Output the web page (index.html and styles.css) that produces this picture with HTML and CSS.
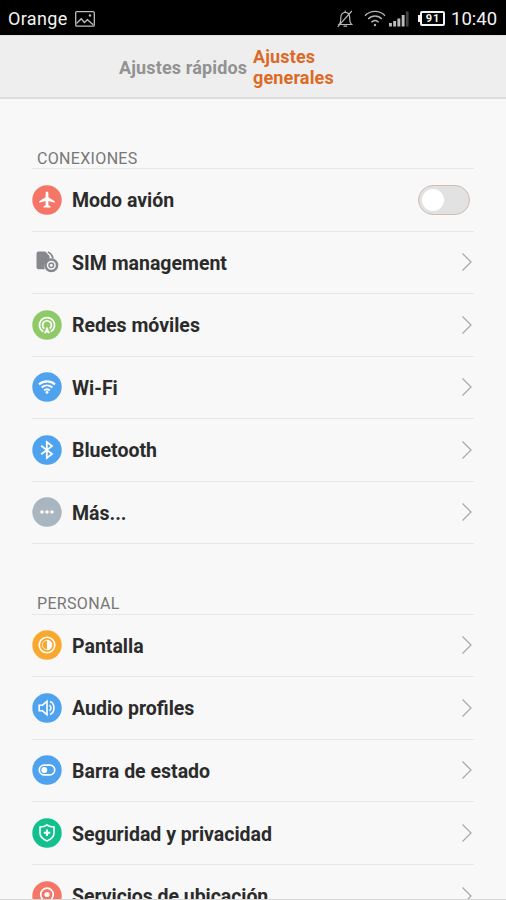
FILE: index.html
```html
<!DOCTYPE html>
<html lang="es">
<head>
<meta charset="utf-8">
<title>Ajustes</title>
<link rel="stylesheet" href="styles.css">
</head>
<body>
<div class="screen">
  <header class="status">
    <span class="carrier">Orange</span>
    <svg class="picture" width="20" height="16" viewBox="0 0 20 16" fill="none" stroke="#bdbdbd" stroke-width="1.3"><rect x=".7" y=".7" width="18.6" height="14.4" rx="1.2"/><path d="M1.5 12.5l4.700-4.700 3.200 3.700 3-2.800 5.800 5"/><circle cx="15" cy="4.500" r=".6"/></svg>
    <div class="indicators">
      <svg class="bell" width="18" height="20" viewBox="0 0 18 20" fill="none" stroke="#b8b8b8" stroke-width="1.2"><path d="M3 15.500c1.800-1.600 1.800-3.200 1.800-6.500 0-3.400 1.700-5.600 4.500-5.600s4.400 2.200 4.400 5.600c0 3.300.1 4.900 1.900 6.500zM9.200 1.500v2M7.500 17.200h3.600M1.700 17.800L15.800 2"/></svg>
      <svg class="signal-wifi" width="22" height="17" viewBox="0 0 22 17" fill="none" stroke="#b4b4b4" stroke-width="1.4"><path d="M1 5.700c5.400-5.800 14.600-5.800 20 0M4.200 9c3.800-4 9.800-4 13.600 0M7.400 12.200c2.200-2.200 5-2.200 7.200 0"/><circle cx="11" cy="15" r="1.200" fill="#b4b4b4" stroke="none"/></svg>
      <svg class="bars" width="20" height="16" viewBox="0 0 20 16" fill="#bcbcbc"><path d="M0 12h2.900v3.500H0zM4.200 10h2.900v5.500H4.200zM8.400 7.500h2.900v8H8.400zM12.700 4h2.900v11.500h-2.900z"/><path d="M16.900 .5h2.700v15h-2.700z" fill="#444"/></svg>
      <div class="battery">91</div>
      <span class="clock">10:40</span>
    </div>
  </header>
  <nav class="tabs">
    <a class="tab quick">Ajustes rápidos</a>
    <a class="tab current">Ajustes<br>generales</a>
  </nav>
  <main class="settings">
    <section class="group">
      <h2>CONEXIONES</h2>
      <div class="row">
        <svg class="icon" viewBox="0 0 30 30"><circle cx="15" cy="15" r="14.700" fill="#f57567"/><path fill="#fff" d="M15 6.600c.9 0 1.400.9 1.400 2.200v3.400l6.400 4v1.600l-6.400-1.800v4l2.200 1.600v1H11.400v-1l2.200-1.600v-4l-6.400 1.800v-1.600l6.400-4V8.800c0-1.300.5-2.200 1.400-2.200z"/></svg>
        <span class="label">Modo avión</span>
        <span class="switch"><span class="knob"></span></span>
      </div>
      <div class="row">
        <svg class="icon" viewBox="0 0 30 30"><path fill="#85898e" d="M6.500 4.500h6.700l4.300 4.500v3.200c-4 1.300-6.200 5.400-4.700 10.100H6.500a2 2 0 0 1-2-2V6.500a2 2 0 0 1 2-2z"/><path d="M15.800 5c2.900 1.200 4.600 3.200 5.200 6.300" fill="none" stroke="#85898e" stroke-width="1.800"/><circle cx="19.300" cy="18.300" r="5.800" fill="#f8f8f8" stroke="#85898e" stroke-width="2.500"/><circle cx="19.300" cy="18.300" r="2.300" fill="none" stroke="#85898e" stroke-width="1.500"/></svg>
        <span class="label">SIM management</span>
        <svg class="chevron" viewBox="0 0 12 20"><path d="M1.500 1.500l8.500 8.500-8.500 8.500"/></svg>
      </div>
      <div class="row">
        <svg class="icon" viewBox="0 0 30 30"><circle cx="15" cy="15" r="14.700" fill="#8fca69"/><g fill="none" stroke="#fff" stroke-width="1.700"><path d="M11.300 21.800a7.600 7.600 0 1 1 7.400 0"/><path d="M12.300 18.600a4.400 4.400 0 1 1 5.400 0"/></g><path d="M15 16.500l-3 6.700h2l1-1.200 1 1.200h2z" fill="#fff"/></svg>
        <span class="label">Redes móviles</span>
        <svg class="chevron" viewBox="0 0 12 20"><path d="M1.500 1.500l8.500 8.500-8.500 8.500"/></svg>
      </div>
      <div class="row">
        <svg class="icon" viewBox="0 0 30 30"><circle cx="15" cy="15" r="14.700" fill="#4ea2ee"/><g fill="none" stroke="#fff" stroke-width="2.100"><path d="M7 12.400c4.700-4 11.300-4 16 0M9.600 15.500c3.200-2.700 7.600-2.700 10.800 0M12.200 18.300c1.700-1.300 3.900-1.300 5.600 0"/></g><circle cx="15" cy="20.400" r="1.400" fill="#fff"/></svg>
        <span class="label">Wi-Fi</span>
        <svg class="chevron" viewBox="0 0 12 20"><path d="M1.500 1.500l8.500 8.500-8.500 8.500"/></svg>
      </div>
      <div class="row">
        <svg class="icon" viewBox="0 0 30 30"><circle cx="15" cy="15" r="14.700" fill="#4ea2ee"/><path d="M9.200 10.800l10.800 8.100-5.200 4V7.100l5.200 4-10.800 8.100" fill="none" stroke="#fff" stroke-width="1.800"/></svg>
        <span class="label">Bluetooth</span>
        <svg class="chevron" viewBox="0 0 12 20"><path d="M1.500 1.500l8.500 8.500-8.500 8.500"/></svg>
      </div>
      <div class="row">
        <svg class="icon" viewBox="0 0 30 30"><circle cx="15" cy="15" r="14.700" fill="#a9b5bf"/><g fill="#fff"><circle cx="10" cy="15" r="1.800"/><circle cx="15" cy="15" r="1.800"/><circle cx="20" cy="15" r="1.800"/></g></svg>
        <span class="label">Más...</span>
        <svg class="chevron" viewBox="0 0 12 20"><path d="M1.500 1.500l8.500 8.500-8.500 8.500"/></svg>
      </div>
    </section>
    <section class="group">
      <h2>PERSONAL</h2>
      <div class="row">
        <svg class="icon" viewBox="0 0 30 30"><circle cx="15" cy="15" r="14.700" fill="#f9a82f"/><circle cx="15" cy="15" r="7.800" fill="none" stroke="#fff" stroke-width="1.600"/><circle cx="15" cy="15" r="4.700" fill="none" stroke="#fff" stroke-width=".8"/><path d="M15 9.800a5.200 5.200 0 0 1 0 10.400z" fill="#fff"/></svg>
        <span class="label">Pantalla</span>
        <svg class="chevron" viewBox="0 0 12 20"><path d="M1.500 1.500l8.500 8.500-8.500 8.500"/></svg>
      </div>
      <div class="row">
        <svg class="icon" viewBox="0 0 30 30"><circle cx="15" cy="15" r="14.700" fill="#4ea2ee"/><g fill="none" stroke="#fff" stroke-width="1.600"><path d="M7.200 12.200h3.300l4.500-4v13.600l-4.500-4H7.200zM17.500 12.200c1.900 1.200 1.900 4.400 0 5.600M18 8.600c5.300 2 5.300 10.800 0 12.800"/></g></svg>
        <span class="label">Audio profiles</span>
        <svg class="chevron" viewBox="0 0 12 20"><path d="M1.500 1.500l8.500 8.500-8.500 8.500"/></svg>
      </div>
      <div class="row">
        <svg class="icon" viewBox="0 0 30 30"><circle cx="15" cy="15" r="14.700" fill="#4ea2ee"/><rect x="7.300" y="10.200" width="15.400" height="9.600" rx="4.800" fill="none" stroke="#fff" stroke-width="1.700"/><circle cx="12.300" cy="15" r="2.900" fill="#fff"/></svg>
        <span class="label">Barra de estado</span>
        <svg class="chevron" viewBox="0 0 12 20"><path d="M1.500 1.500l8.500 8.500-8.500 8.500"/></svg>
      </div>
      <div class="row">
        <svg class="icon" viewBox="0 0 30 30"><circle cx="15" cy="15" r="14.700" fill="#11c08d"/><path d="M15 7c2 1.500 4.300 2 7 2v5.700c0 4-2.800 6.500-7 8.200-4.200-1.700-7-4.200-7-8.200V9c2.700 0 5-.5 7-2z" fill="none" stroke="#fff" stroke-width="1.600"/><path d="M15 11.600v6.400M11.800 14.800h6.400" stroke="#fff" stroke-width="2.100"/></svg>
        <span class="label">Seguridad y privacidad</span>
        <svg class="chevron" viewBox="0 0 12 20"><path d="M1.500 1.500l8.500 8.500-8.500 8.500"/></svg>
      </div>
      <div class="row">
        <svg class="icon" viewBox="0 0 30 30"><circle cx="15" cy="15" r="14.700" fill="#f57567"/><path d="M15 23.500c-3.500-3.500-6.300-6.500-6.300-10a6.300 6.300 0 0 1 12.600 0c0 3.500-2.800 6.500-6.300 10z" fill="none" stroke="#fff" stroke-width="1.700"/><circle cx="15" cy="13.500" r="2.600" fill="#fff"/></svg>
        <span class="label location">Servicios de ubicación</span>
        <svg class="chevron" viewBox="0 0 12 20"><path d="M1.500 1.500l8.500 8.500-8.500 8.500"/></svg>
      </div>
    </section>
  </main>
</div>
</body>
</html>
```
FILE: styles.css
```css
* { box-sizing: border-box; }
body { margin: 0; background: #f8f8f8; font-family: Roboto, "Liberation Sans", sans-serif; }
.screen { width: 506px; height: 900px; overflow: hidden; display: flex; flex-direction: column; border-bottom: 1px solid #d6d6d6; }
.status { height: 35px; flex: none; background: #000; color: #f4f4f4; display: flex; align-items: center; padding: 2px 9px 0 8px; }
.carrier { font-size: 18px; letter-spacing: .35px; width: 60px; white-space: nowrap; }
.picture { margin-left: 7px; }
.indicators { margin-left: auto; display: flex; align-items: center; }
.bell { margin-right: 10px; }
.signal-wifi { margin-right: 3px; }
.bars { margin-right: 11px; }
.battery { position: relative; width: 25px; height: 15px; border: 2px solid #f4f4f4; border-radius: 2px; font-size: 11px; font-weight: 700; line-height: 11px; letter-spacing: 1px; text-align: center; padding-left: 1px; margin-right: 6px; }
.battery::before { content: ""; position: absolute; left: -4px; top: 2px; width: 2px; height: 7px; background: #f4f4f4; }
.clock { font-size: 18.500px; width: 46px; white-space: nowrap; }
.tabs { height: 64px; flex: none; background: #eee; border-top: 1px solid #e2e2e2; border-bottom: 2px solid #ddd; display: flex; align-items: center; padding: 1px 0 0 119px; }
.tab { font-size: 18px; line-height: 21px; font-weight: 700; letter-spacing: .15px; white-space: nowrap; }
.quick { width: 134px; color: #929292; }
.current { color: #dc6a26; }
.settings { padding: 48.500px 32px 0; }
.group { margin-bottom: 49px; }
h2 { margin: 0; height: 21.500px; padding-left: 5px; font-size: 16px; line-height: 21px; font-weight: 400; letter-spacing: .33px; color: #777; border-bottom: 1px solid #e7e7e7; }
.row { height: 62.500px; border-bottom: 1px solid #e7e7e7; display: flex; align-items: center; }
.group + .group .row { height: 62.600px; }
.icon { width: 30px; height: 30px; flex: none; }
.label { margin-left: 10px; padding-top: 2px; font-size: 19.500px; font-weight: 700; color: #2b2b2b; white-space: nowrap; }
.location { letter-spacing: -.05px; }
.chevron { width: 12px; height: 20px; margin: 0 1px 0 auto; fill: none; stroke: #aaa; stroke-width: 1.300; }
.switch { width: 52px; height: 30px; margin: 0 4px 0 auto; padding: 3px; border: 1px solid #cfbdb2; border-radius: 15px; background: #e2e2e2; display: flex; align-items: center; }
.knob { width: 22px; height: 22px; border-radius: 50%; background: #fff; }
```
